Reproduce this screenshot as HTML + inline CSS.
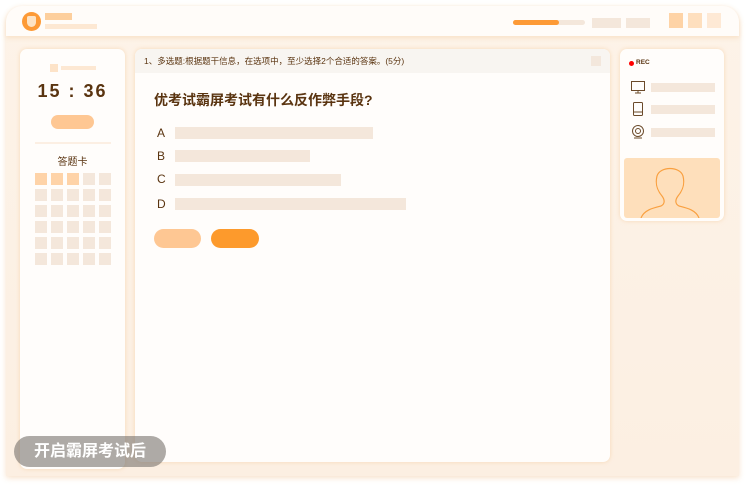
<!DOCTYPE html>
<html><head><meta charset="utf-8"><style>
*{margin:0;padding:0;box-sizing:border-box}
body{width:750px;height:488px;background:#fff;position:relative;overflow:hidden;font-family:"Liberation Sans","Noto Sans CJK SC",sans-serif}
.a{position:absolute}
.win{left:6px;top:6px;width:733px;height:470px;border-radius:16px 16px 0 0;background:linear-gradient(180deg,#fdf3e8,#fcefe2);box-shadow:0 2px 6px rgba(240,190,140,.45)}
.hdr{left:6px;top:6px;width:733px;height:30px;border-radius:16px 16px 0 0;background:#fffcf9;box-shadow:0 2px 4px rgba(245,210,170,.5)}
.panel{background:#fffdfb;border-radius:7px;box-shadow:0 0 4px rgba(245,200,150,.6)}
.bar{background:#f4e7db}
.cell{width:12px;height:12px;background:#f4e7db;position:absolute}
</style></head><body>
<div class="a win"></div>
<div class="a hdr"></div>
<div class="a" style="left:22px;top:12px;width:19px;height:19px;border-radius:50%;background:#fd9a36"></div>
<div class="a" style="left:27px;top:16px;width:9px;height:11px;border-radius:2px 2px 5px 5px;background:#fde3c4"></div>
<div class="a" style="left:45px;top:13px;width:27px;height:7px;background:#fdcf9d"></div>
<div class="a" style="left:45px;top:24px;width:52px;height:5px;background:#fde8d3"></div>
<div class="a" style="left:513px;top:20px;width:72px;height:5px;border-radius:3px;background:#f4e7db"></div>
<div class="a" style="left:513px;top:20px;width:46px;height:5px;border-radius:3px;background:#fd9a36"></div>
<div class="a bar" style="left:592px;top:18px;width:29px;height:10px"></div>
<div class="a bar" style="left:626px;top:18px;width:24px;height:10px"></div>
<div class="a" style="left:669px;top:13px;width:14px;height:15px;background:#fed3a6"></div>
<div class="a" style="left:688px;top:13px;width:14px;height:15px;background:#fedfbe"></div>
<div class="a" style="left:707px;top:13px;width:14px;height:15px;background:#fee9d5"></div>

<div class="a panel" style="left:20px;top:49px;width:105px;height:420px"></div>
<div class="a" style="left:50px;top:64px;width:8px;height:8px;background:#fde3c8"></div>
<div class="a" style="left:61px;top:66px;width:35px;height:4px;background:#fde8d3"></div>
<div class="a" style="left:20px;top:81px;width:105px;text-align:center;font-size:18px;font-weight:bold;color:#5a3410;letter-spacing:2px">15 : 36</div>
<div class="a" style="left:51px;top:115px;width:43px;height:14px;border-radius:7px;background:#fec793"></div>
<div class="a" style="left:35px;top:142px;width:76px;height:2px;background:#fcefe3"></div>
<div class="a" style="left:20px;top:153px;width:105px;text-align:center;font-size:10px;color:#5a3410">答题卡</div>
<div class="a" style="left:35px;top:173px">
<div class="cell" style="left:0;top:0;background:#fed3a8"></div><div class="cell" style="left:16px;top:0;background:#fed3a8"></div><div class="cell" style="left:32px;top:0;background:#fed3a8"></div><div class="cell" style="left:48px;top:0"></div><div class="cell" style="left:64px;top:0"></div>
<div class="cell" style="left:0;top:16px"></div><div class="cell" style="left:16px;top:16px"></div><div class="cell" style="left:32px;top:16px"></div><div class="cell" style="left:48px;top:16px"></div><div class="cell" style="left:64px;top:16px"></div>
<div class="cell" style="left:0;top:32px"></div><div class="cell" style="left:16px;top:32px"></div><div class="cell" style="left:32px;top:32px"></div><div class="cell" style="left:48px;top:32px"></div><div class="cell" style="left:64px;top:32px"></div>
<div class="cell" style="left:0;top:48px"></div><div class="cell" style="left:16px;top:48px"></div><div class="cell" style="left:32px;top:48px"></div><div class="cell" style="left:48px;top:48px"></div><div class="cell" style="left:64px;top:48px"></div>
<div class="cell" style="left:0;top:64px"></div><div class="cell" style="left:16px;top:64px"></div><div class="cell" style="left:32px;top:64px"></div><div class="cell" style="left:48px;top:64px"></div><div class="cell" style="left:64px;top:64px"></div>
<div class="cell" style="left:0;top:80px"></div><div class="cell" style="left:16px;top:80px"></div><div class="cell" style="left:32px;top:80px"></div><div class="cell" style="left:48px;top:80px"></div><div class="cell" style="left:64px;top:80px"></div>
</div>

<div class="a panel" style="left:135px;top:49px;width:475px;height:413px;overflow:hidden">
<div style="height:24px;background:#f8f5f1;font-size:8.5px;color:#5a3410;padding:6px 0 0 9px">1、多选题:根据题干信息，在选项中，至少选择2个合适的答案。(5分)</div>
<div class="a" style="left:456px;top:7px;width:10px;height:10px;background:#f3e7dc"></div>
</div>
<div class="a" style="left:154px;top:90px;font-size:14px;font-weight:bold;color:#5a3410">优考试霸屏考试有什么反作弊手段?</div>
<div class="a" style="left:157px;top:126px;font-size:12px;color:#5a3410">A</div>
<div class="a" style="left:157px;top:149px;font-size:12px;color:#5a3410">B</div>
<div class="a" style="left:157px;top:172px;font-size:12px;color:#5a3410">C</div>
<div class="a" style="left:157px;top:197px;font-size:12px;color:#5a3410">D</div>
<div class="a bar" style="left:175px;top:127px;width:198px;height:12px"></div>
<div class="a bar" style="left:175px;top:150px;width:135px;height:12px"></div>
<div class="a bar" style="left:175px;top:174px;width:166px;height:12px"></div>
<div class="a bar" style="left:175px;top:198px;width:231px;height:12px"></div>
<div class="a" style="left:154px;top:229px;width:47px;height:19px;border-radius:10px;background:#fec793"></div>
<div class="a" style="left:211px;top:229px;width:48px;height:19px;border-radius:10px;background:#fd9a2c"></div>

<div class="a panel" style="left:620px;top:49px;width:104px;height:172px"></div>
<div class="a" style="left:629px;top:61px;width:5px;height:5px;border-radius:50%;background:#f00"></div>
<div class="a" style="left:636px;top:59px;font-size:6.5px;font-weight:bold;color:#5a3410">REC</div>
<svg class="a" style="left:630px;top:80px" width="16" height="16" viewBox="0 0 16 16" fill="none" stroke="#6b4a2a" stroke-width="1"><rect x="1.5" y="1.5" width="13" height="9"/><path d="M8 10.5v2M5 13h6"/></svg>
<svg class="a" style="left:632px;top:102px" width="12" height="14" viewBox="0 0 12 14" fill="none" stroke="#6b4a2a" stroke-width="1"><rect x="1.5" y="0.5" width="9" height="13" rx="1"/><path d="M1.5 10h9"/></svg>
<svg class="a" style="left:630px;top:124px" width="16" height="16" viewBox="0 0 16 16" fill="none" stroke="#6b4a2a" stroke-width="1"><circle cx="8" cy="7" r="5.5"/><circle cx="8" cy="7" r="2.5"/><path d="M4 14h8"/></svg>
<div class="a bar" style="left:651px;top:83px;width:64px;height:9px"></div>
<div class="a bar" style="left:651px;top:105px;width:64px;height:9px"></div>
<div class="a bar" style="left:651px;top:128px;width:64px;height:9px"></div>
<div class="a" style="left:624px;top:158px;width:96px;height:60px;border-radius:3px;background:#fedfbb;overflow:hidden">
<svg width="96" height="60" viewBox="0 0 96 60" fill="none" stroke="#f9a040" stroke-width="1.2"><path d="M17 60c3-8 12-10 20-12 4-2 4-6 1-10-5-6-7-12-5-20 3-10 23-10 26 0 2 8 0 14-5 20-3 4-3 8 1 10 8 2 17 4 20 12"/></svg>
</div>

<div class="a" style="left:14px;top:436px;width:152px;height:31px;border-radius:16px;background:rgba(120,115,110,.6);color:#fff;font-size:16px;font-weight:bold;text-align:center;line-height:31px">开启霸屏考试后</div>
</body></html>
